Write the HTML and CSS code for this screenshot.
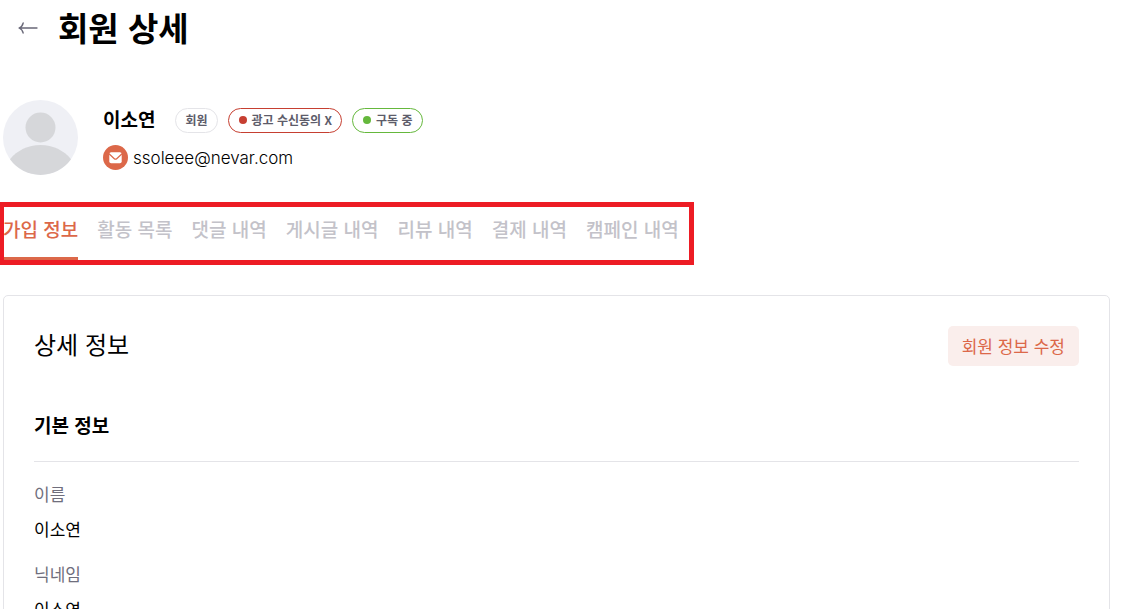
FILE: index.html
```html
<!DOCTYPE html>
<html lang="ko">
<head>
    <meta charset="UTF-8">
    <meta name="viewport" content="width=device-width, initial-scale=1.0">
    <title>회원 상세</title>
    <link rel="stylesheet" href="styles.css">
</head>
<body>
    <header class="page-header">
        <button type="button" class="back-btn" aria-label="뒤로">
            <svg width="20" height="12" viewBox="0 0 20 12" fill="none" stroke="#686777" stroke-width="1.3" stroke-linecap="round" stroke-linejoin="round">
                <path d="M19 6H1.5M5.2 1C4.6 3.6 3.2 5.2 1 6c2.2.8 3.6 2.4 4.2 5"/>
            </svg>
        </button>
        <h1 class="page-title">회원 상세</h1>
    </header>

    <section class="profile">
        <svg class="avatar" width="75" height="75" viewBox="0 0 75 75" role="img" aria-label="프로필 이미지">
            <circle cx="37.5" cy="37.5" r="37.5" fill="#eff0f5"/>
            <circle cx="37.5" cy="27.5" r="15" fill="#d6d7da"/>
            <path d="M7 59.2C14 50.5 25 45 37.5 45S61 50.5 68 59.2A37.5 37.5 0 0 1 7 59.2Z" fill="#d6d7da"/>
        </svg>
        <div class="profile-info">
            <div class="profile-row">
                <strong class="profile-name">이소연</strong>
                <div class="badges">
                    <span class="badge">회원</span>
                    <span class="badge badge-red">광고 수신동의 X</span>
                    <span class="badge badge-green">구독 중</span>
                </div>
            </div>
            <div class="profile-email">
                <svg width="25" height="25" viewBox="0 0 25 25" aria-hidden="true">
                    <circle cx="12.5" cy="12.5" r="12.5" fill="#dc6849"/>
                    <rect x="6.3" y="7.2" width="12.4" height="11" rx="1.8" fill="#fff"/>
                    <path d="M6 8.8l5.3 4.9a1.8 1.8 0 0 0 2.4 0l5.3-4.9" fill="none" stroke="#dc6849" stroke-width="1.2"/>
                </svg>
                <span>ssoleee@nevar.com</span>
            </div>
        </div>
    </section>

    <nav class="tabs">
        <button type="button" class="tab active">가입 정보</button>
        <button type="button" class="tab">활동 목록</button>
        <button type="button" class="tab">댓글 내역</button>
        <button type="button" class="tab">게시글 내역</button>
        <button type="button" class="tab">리뷰 내역</button>
        <button type="button" class="tab">결제 내역</button>
        <button type="button" class="tab">캠페인 내역</button>
    </nav>

    <main class="card">
        <div class="card-header">
            <h2 class="card-title">상세 정보</h2>
            <button type="button" class="edit-btn">회원 정보 수정</button>
        </div>
        <h3 class="section-title">기본 정보</h3>
        <dl class="info-list">
            <dt>이름</dt>
            <dd>이소연</dd>
            <dt>닉네임</dt>
            <dd>이소연</dd>
        </dl>
    </main>
</body>
</html>
```
FILE: styles.css
```css
* {
    box-sizing: border-box;
}

body {
    margin: 0;
    padding: 0 18px 0 3px;
    font-family: "Noto Sans CJK KR", sans-serif;
    background-color: #fff;
    color: #000;
}

html {
    scrollbar-width: none;
}

h1, h2, h3, dl, dd {
    margin: 0;
}

button {
    padding: 0;
    border: none;
    background: none;
    font-family: inherit;
    cursor: pointer;
}

.page-header {
    display: flex;
    align-items: center;
    gap: 20px;
    height: 56px;
    padding-left: 15px;
}

.back-btn {
    display: flex;
}

.page-title {
    padding-bottom: 2px;
    font-size: 33px;
    line-height: 40px;
    font-weight: 700;
}

.profile {
    display: flex;
    align-items: flex-end;
    gap: 25px;
    margin-top: 44px;
}

.profile-info {
    display: flex;
    flex-direction: column;
    gap: 12px;
    padding-bottom: 5px;
}

.profile-row {
    display: flex;
    align-items: flex-start;
    gap: 20px;
}

.profile-name {
    font-size: 19px;
    line-height: 22px;
    font-weight: 700;
}

.badges {
    display: flex;
    gap: 10px;
}

.badge {
    display: flex;
    align-items: center;
    height: 25px;
    padding: 0 9px 1px;
    border: 1px solid #e4e4e8;
    border-radius: 13px;
    font-size: 12px;
    line-height: 22px;
    font-weight: 700;
    color: #5d5c6a;
}

.badge-red {
    border-color: #c63f31;
}

.badge-green {
    border-color: #65b83c;
}

.badge-red::before,
.badge-green::before {
    content: "";
    width: 8px;
    height: 8px;
    margin-right: 5px;
    margin-left: 1px;
    border-radius: 50%;
    background-color: #c63f31;
}

.badge-green::before {
    background-color: #65b83c;
}

.profile-email {
    display: flex;
    align-items: flex-end;
    gap: 5px;
    height: 25px;
    font-family: Inter, "Noto Sans CJK KR", sans-serif;
    font-size: 17px;
    line-height: 24px;
    font-weight: 300;
}

.tabs {
    position: relative;
    display: flex;
    gap: 19px;
    width: fit-content;
    margin-top: 27px;
    height: 63px;
}

/* highlight frame over the tabs */
.tabs::after {
    content: "";
    position: absolute;
    top: 0;
    right: -15px;
    bottom: 0;
    left: -4px;
    border: 5px solid #ed1c24;
    pointer-events: none;
}

.tab {
    height: 58px;
    padding-bottom: 2px;
    border-bottom: 3px solid transparent;
    font-size: 19px;
    font-weight: 500;
    color: #c3c2c9;
}

.tab.active {
    border-color: #dc6849;
    color: #dc6849;
}

.card {
    margin-top: 30px;
    padding: 30px;
    border: 1px solid #e4e4e8;
    border-radius: 5px;
}

.card-header {
    display: flex;
    align-items: flex-start;
    justify-content: space-between;
    height: 40px;
}

.card-title {
    font-size: 24px;
    line-height: 35px;
    font-weight: 400;
}

.edit-btn {
    height: 40px;
    padding: 0 14px 2px;
    border-radius: 5px;
    background-color: #faeeec;
    font-size: 17px;
    color: #dc6849;
}

.section-title {
    margin-top: 40px;
    padding-bottom: 17px;
    border-bottom: 1px solid #e4e4e8;
    font-size: 19px;
    line-height: 38px;
    font-weight: 700;
}

.info-list {
    padding-top: 19px;
    font-size: 17px;
    line-height: 25px;
}

.info-list dt {
    margin-bottom: 10px;
    color: #6f6e7c;
}

.info-list dd {
    margin-bottom: 20px;
}
```
